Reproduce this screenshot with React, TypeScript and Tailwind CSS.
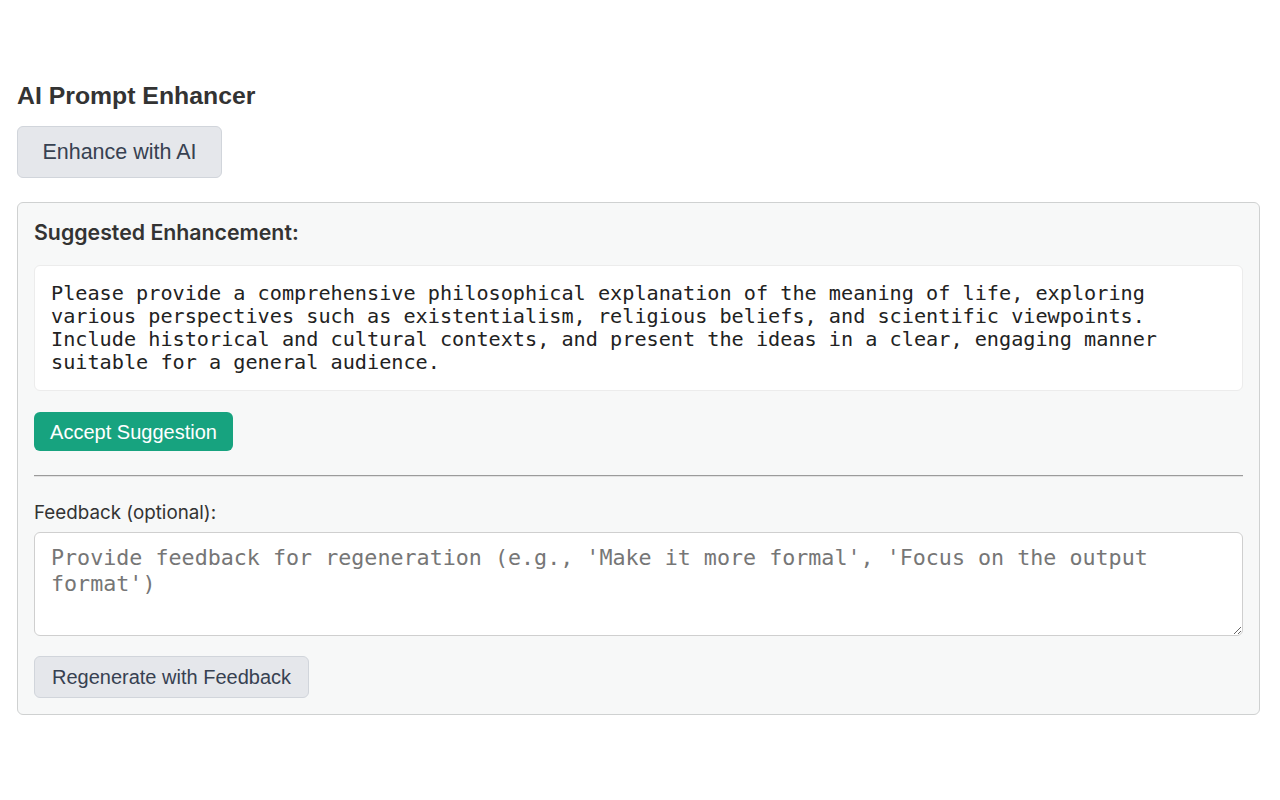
import React from "react";

const sans = "font-['Liberation_Sans',Arial,sans-serif]";
const ui = "font-['Inter','Liberation_Sans',sans-serif]";
const mono = "font-['DejaVu_Sans_Mono',monospace]";

const suggestion =
  "Please provide a comprehensive philosophical explanation of the meaning of life, exploring various perspectives such as existentialism, religious beliefs, and scientific viewpoints. Include historical and cultural contexts, and present the ideas in a clear, engaging manner suitable for a general audience.";

export default function App() {
  const [feedback, setFeedback] = React.useState("");

  return (
    <div className="min-h-[800px] bg-white px-[17px] pt-[81px] text-[#333]">
      <h2 className={`${sans} text-[24.8px] font-bold leading-[30px]`}>
        AI Prompt Enhancer
      </h2>

      <button
        className={`${sans} mt-[15px] h-[52px] w-[205px] rounded-md border border-[#d1d5db] bg-[#e5e7eb] text-[21.5px] text-[#374151]`}
      >
        Enhance with AI
      </button>

      <div className="mt-[24px] w-[1243px] rounded-md border border-[#cfd1d1] bg-[#f7f8f8] p-4">
        {/* Suggested text */}
        <h3 className={`${ui} text-[21.3px] font-semibold leading-[26px] text-[#333]`}>
          Suggested Enhancement:
        </h3>
        <div
          className={`${mono} mt-[20px] rounded-md border border-[#ececec] bg-white px-4 py-4 text-[20.2px] leading-[23px] text-[#222] whitespace-pre-wrap`}
        >
          {suggestion}
        </div>

        <button
          className={`${sans} mt-[21px] h-[39px] w-[199px] rounded-md bg-[#17a37f] text-[20px] text-white`}
        >
          Accept Suggestion
        </button>

        <hr className="mt-[24px] border-0 border-t border-b border-t-[#9b9b9b] border-b-[#e3e3e3]" />

        {/* Feedback */}
        <label className={`${ui} mt-[24px] block text-[18.8px] leading-[24px] text-[#333]`}>
          Feedback (optional):
        </label>
        <textarea
          rows={3}
          value={feedback}
          onChange={(e) => setFeedback(e.target.value)}
          placeholder="Provide feedback for regeneration (e.g., 'Make it more formal', 'Focus on the output format')"
          className={`${mono} mt-[7px] block h-[104px] w-full rounded-md border border-[#cfcfcf] bg-white px-4 py-3 text-[21.7px] leading-[26px] text-[#222] placeholder:text-[#767676] focus:outline-none`}
        />

        <button
          className={`${sans} mt-[20px] h-[42px] w-[275px] rounded-md border border-[#d1d5db] bg-[#e5e7eb] text-[20px] text-[#374151]`}
        >
          Regenerate with Feedback
        </button>
      </div>
    </div>
  );
}
